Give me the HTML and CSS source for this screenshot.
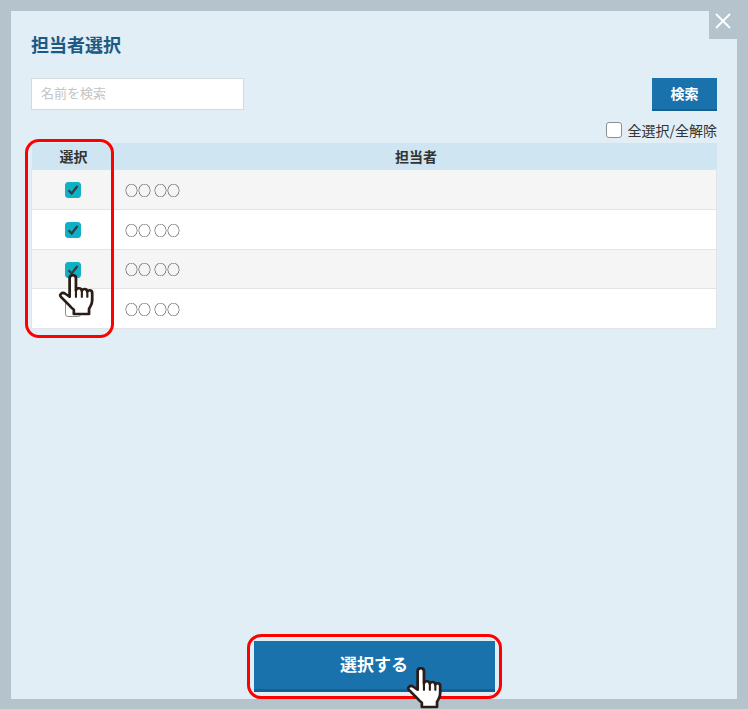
FILE: index.html
```html
<!DOCTYPE html>
<html lang="ja">
<head>
<meta charset="utf-8">
<title>担当者選択</title>
<link rel="stylesheet" href="styles.css">
</head>
<body>
<svg class="defs" width="0" height="0" aria-hidden="true">
  <symbol id="hand" viewBox="0 0 36 44" preserveAspectRatio="none">
    <path d="M11 4.500c0-2 1.300-3.300 3-3.300s3 1.300 3 3.300v12.700c.4-1.500 1.500-2.300 2.800-2.300 1.500 0 2.600 1 2.800 2.700.4-1.300 1.400-2 2.600-2 1.500 0 2.500 1.100 2.600 2.800.4-.9 1.200-1.400 2.100-1.400 1.500 0 2.500 1.200 2.500 3v7.500c0 2.800-.6 4.500-1.900 6.800l-1.100 2.200v5.300H15v-4.300c-2-1.600-3.500-3.500-5-5.500l-7-7.700c-1-1.200-1.200-2.600-.2-3.600 1.100-1.100 2.900-1 4.300.1l3.900 3z" fill="#fff" stroke="#2a1c16" stroke-width="2.600" stroke-linejoin="round"/>
    <path d="M17 17v7M22.600 17.500V24M27.800 18.800V24" fill="none" stroke="#2a1c16" stroke-width="2" stroke-linecap="round"/>
  </symbol>
</svg>
<main class="modal">
  <button class="close" type="button" aria-label="閉じる">
    <svg width="16" height="16" viewBox="0 0 16 16"><path d="M1 1l14 14M15 1L1 15" stroke="#fff" stroke-width="1.800"/></svg>
  </button>
  <h1 class="title">担当者選択</h1>
  <div class="search-row">
    <input class="search-input" type="text" placeholder="名前を検索">
    <button class="search-btn" type="button">検索</button>
  </div>
  <label class="select-all"><span class="box"></span><span>全選択/全解除</span></label>
  <div class="table-wrap">
    <table class="staff">
      <thead>
        <tr><th class="col-select">選択</th><th>担当者</th></tr>
      </thead>
      <tbody>
        <tr class="row-tall"><td class="cell-check"><span class="box checked"><svg width="14" height="14" viewBox="0 0 14 14"><path d="M2.500 7.300l3.200 3.200 5.800-7.500" fill="none" stroke="#333f48" stroke-width="2.300"/></svg></span></td><td class="cell-name"><span class="name">○○ ○○</span></td></tr>
        <tr class="row-tall"><td class="cell-check"><span class="box checked"><svg width="14" height="14" viewBox="0 0 14 14"><path d="M2.500 7.300l3.200 3.200 5.800-7.500" fill="none" stroke="#333f48" stroke-width="2.300"/></svg></span></td><td class="cell-name"><span class="name">○○ ○○</span></td></tr>
        <tr><td class="cell-check cell-check-low"><span class="box checked"><svg width="14" height="14" viewBox="0 0 14 14"><path d="M2.500 7.300l3.200 3.200 5.800-7.500" fill="none" stroke="#333f48" stroke-width="2.300"/></svg></span></td><td class="cell-name"><span class="name">○○ ○○</span></td></tr>
        <tr><td class="cell-check"><span class="box"></span></td><td class="cell-name"><span class="name">○○ ○○</span></td></tr>
      </tbody>
    </table>
    <div class="mark mark-col"></div>
    <svg class="hand hand-row"><use href="#hand"/></svg>
  </div>
  <div class="footer">
    <div class="submit-wrap">
      <button class="submit" type="button">選択する</button>
      <div class="mark mark-submit"></div>
      <svg class="hand hand-submit"><use href="#hand"/></svg>
    </div>
  </div>
</main>
</body>
</html>
```
FILE: styles.css
```css
* { box-sizing: border-box; }
html, body { height: 100%; }
body {
  margin: 0;
  padding: 11px;
  background: #b5c3cd;
  font-family: "Noto Sans CJK JP", "Noto Sans", sans-serif;
  color: #333;
  overflow: hidden;
}
.defs { position: absolute; }
.modal {
  position: relative;
  height: 688px;
  background: #e2eef5;
  padding: 19px 20px 7px;
  display: flex;
  flex-direction: column;
}
.close {
  position: absolute;
  top: -11px;
  right: 0;
  width: 28px;
  height: 39px;
  padding: 3px 0 0;
  border: 0;
  background: #b5c3cd;
  display: flex;
  align-items: center;
  justify-content: center;
}
.title {
  margin: 0;
  height: 28px;
  line-height: 28px;
  font-size: 18px;
  font-weight: 700;
  color: #1c5a86;
}
.search-row {
  margin-top: 20px;
  display: flex;
  justify-content: space-between;
}
.search-input {
  width: 213px;
  height: 32px;
  padding: 0 9px 3px;
  border: 1px solid #d5dadd;
  background: #fff;
  font: 13px "Noto Sans CJK JP", sans-serif;
  outline: 0;
}
.search-input::placeholder { color: #c4c4c4; opacity: 1; }
.search-btn {
  width: 65px;
  height: 33px;
  border: 0;
  border-bottom: 2px solid #15608f;
  background: #1a72ad;
  color: #fff;
  font: 700 14px "Noto Sans CJK JP", sans-serif;
  padding: 0 0 1px;
}
.select-all {
  margin-top: 9px;
  height: 20px;
  display: flex;
  align-items: center;
  justify-content: flex-end;
  gap: 6px;
  font-size: 14px;
  color: #333;
}
.box {
  display: flex;
  align-items: center;
  justify-content: center;
  width: 16px;
  height: 16px;
  border: 1px solid #8e8e8e;
  border-radius: 3px;
  background: #fff;
}
.box.checked { background: #0eb2c4; border-color: #0eb2c4; }
.table-wrap { position: relative; margin-top: 3px; }
.staff {
  width: 686px;
  border-collapse: collapse;
  table-layout: fixed;
}
.staff th {
  height: 26px;
  padding: 0 0 0 2px;
  background: #cfe6f2;
  font-size: 14px;
  font-weight: 700;
  color: #333;
  text-align: center;
  border-bottom: 1px solid #dde3e6;
}
.col-select { width: 82px; }
.staff td {
  height: 39.500px;
  padding: 0;
  background: #fff;
  border: 1px solid #e2e5e7;
  border-width: 0 0 1px;
}
.staff tr.row-tall td { height: 40px; }
.staff tbody tr:nth-child(odd) td { background: #f5f5f5; }
.staff tbody tr td:first-child { border-left: 1px solid #e2e5e7; }
.staff tbody tr td:last-child { border-right: 1px solid #e2e5e7; }
.cell-check .box { margin: 1px auto 0; }
.cell-check-low .box { margin-top: 3px; }
.cell-name {
  padding-left: 11px !important;
  font-size: 13px;
  color: #333;
}
.name { display: inline-block; will-change: transform; }
.mark {
  position: absolute;
  border: 3px solid #f00;
  pointer-events: none;
}
.mark-col {
  left: -6px;
  top: -4px;
  width: 89px;
  height: 199px;
  border-radius: 14px;
}
.hand { position: absolute; width: 38px; height: 42px; }
.hand-row { left: 27px; top: 131px; }
.footer { margin-top: auto; display: flex; justify-content: center; }
.submit-wrap { position: relative; }
.submit {
  display: block;
  width: 241px;
  height: 51px;
  border: 0;
  border-bottom: 3px solid #15608f;
  background: #1a72ad;
  color: #fff;
  font: 700 17px "Noto Sans CJK JP", sans-serif;
  padding: 0 0 3px;
}
.mark-submit {
  left: -7px;
  top: -7px;
  width: 255px;
  height: 65px;
  border-radius: 14px;
}
.hand-submit { left: 152px; top: 26px; }
```
